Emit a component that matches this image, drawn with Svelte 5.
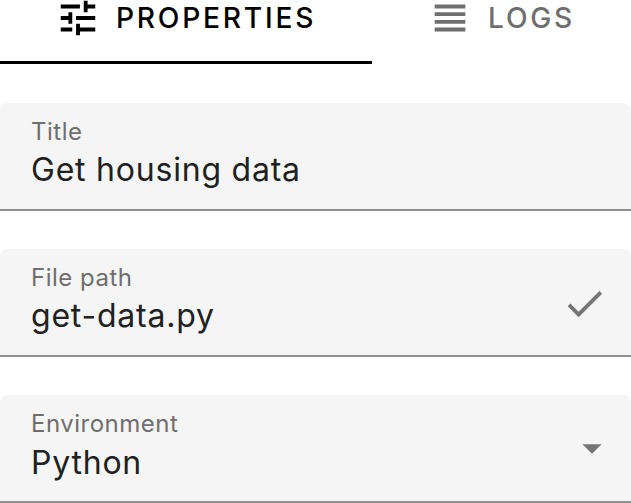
<script>
  const fields = [
    { label: 'Title', value: 'Get housing data', icon: '' },
    { label: 'File path', value: 'get-data.py', icon: 'check' },
    { label: 'Environment', value: 'Python', icon: 'arrow' }
  ];
</script>

<main>
  <nav>
    <button class="tab active">
      <svg width="46" height="46" viewBox="0 0 24 24"><path d="M3 17v2h6v-2H3zM3 5v2h10V5H3zm10 16v-2h8v-2h-8v-2h-2v6h2zM7 9v2H3v2h4v2h2V9H7zm14 4v-2H11v2h10zm-6-4h2V7h4V5h-4V3h-2v6z" /></svg>
      <span>PROPERTIES</span>
    </button>
    <button class="tab logs">
      <svg width="46" height="46" viewBox="0 0 24 24"><path d="M4 15h16v-2H4v2zm0 4h16v-2H4v2zm0-8h16V9H4v2zm0-6v2h16V5H4z" /></svg>
      <span>LOGS</span>
    </button>
  </nav>
  <section>
    {#each fields as f}
      <div class="field {f.icon}">
        <div class="text">
          <div class="label">{f.label}</div>
          <div class="value">{f.value}</div>
        </div>
        {#if f.icon === 'check'}
          <svg width="47" height="47" viewBox="0 0 24 24"><path d="M9 16.17L4.83 12l-1.42 1.41L9 19 21 7l-1.41-1.41z" /></svg>
        {:else if f.icon === 'arrow'}
          <svg width="46" height="46" viewBox="0 0 24 24"><path d="M7 10l5 5 5-5z" /></svg>
        {/if}
      </div>
    {/each}
  </section>
</main>

<style>
  main { height: 503px; overflow: hidden; background: #fff; font-family: Inter, sans-serif; }
  nav { display: flex; height: 64px; }
  .tab { display: flex; align-items: flex-start; box-sizing: border-box; height: 64px; padding: 0; border: 0; background: none; font: 450 28.2px/36px Inter, sans-serif; letter-spacing: 2.75px; color: #6e6e6e; white-space: nowrap; }
  .tab svg { flex: none; margin-top: -5px; fill: currentColor; }
  .active { width: 372px; padding-left: 55px; border-bottom: 3px solid #000; color: #000; }
  .active span { margin-left: 15px; }
  .logs { padding-left: 54.5px; }
  .logs span { margin-left: 15.5px; }
  section { display: flex; flex-direction: column; gap: 38px; padding-top: 39px; }
  .field { display: flex; align-items: center; justify-content: space-between; box-sizing: border-box; height: 108px; padding: 0 16px 0 31px; border-bottom: 2px solid #8e8e8e; border-radius: 8px 8px 0 0; background: #f5f5f5; }
  .text { align-self: flex-start; padding-top: 14px; }
  .label { font-size: 24px; line-height: 30px; letter-spacing: .5px; color: #6e6e6e; }
  .value { font-size: 32px; line-height: 46px; letter-spacing: .78px; color: #212121; }
  .arrow .value { padding-top: 1px; }
  .field svg { fill: #757575; }
  .check svg { margin: 2px 7px 0 0; }
</style>
